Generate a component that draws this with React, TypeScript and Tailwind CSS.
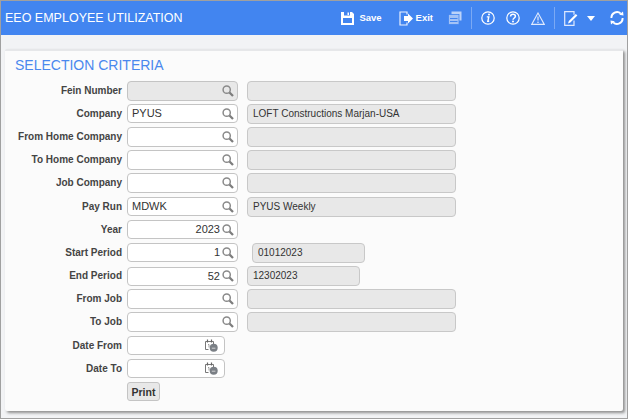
type Row = {
  label: string
  value?: string
  right?: boolean
  tall?: boolean
  disabled?: boolean
  date?: boolean
  desc?: string
  descClass?: string
}

const ROWS: Row[] = [
  { label: 'Fein Number', disabled: true, desc: '', tall: true },
  { label: 'Company', value: 'PYUS', desc: 'LOFT Constructions Marjan-USA' },
  { label: 'From Home Company', desc: '', tall: true },
  { label: 'To Home Company', desc: '', tall: true },
  { label: 'Job Company', desc: '', tall: true },
  { label: 'Pay Run', value: 'MDWK', desc: 'PYUS Weekly' },
  { label: 'Year', value: '2023', right: true },
  { label: 'Start Period', value: '1', right: true, desc: '01012023', descClass: 'ml-[14px] w-[113px]' },
  { label: 'End Period', value: '52', right: true, desc: '12302023', descClass: 'ml-[9px] w-[113px]' },
  { label: 'From Job', desc: '', tall: true },
  { label: 'To Job', desc: '', tall: true },
  { label: 'Date From', date: true },
  { label: 'Date To', date: true },
]

function SaveIcon() {
  return (
    <svg width="13" height="14" viewBox="0 0 13 14" fill="none">
      <path d="M0 1h11l2 2v11H0z" fill="#fff" />
      <rect x="3" y="1" width="6" height="3.5" fill="#4285f0" />
      <rect x="6.5" y="1.5" width="1.5" height="2.5" fill="#fff" />
      <rect x="2" y="7" width="9" height="5" fill="#4285f0" />
    </svg>
  )
}

function ExitIcon() {
  return (
    <svg width="15" height="15" viewBox="0 0 15 15" fill="none">
      <path d="M8 3.5V1H1v13h7v-2.5" stroke="#eaf1fe" strokeWidth="1.2" />
      <path d="M5 5h4V2.5L14 7.5l-5 5V10H5z" fill="#fff" />
    </svg>
  )
}

function PrintIcon() {
  return (
    <svg width="14" height="14" viewBox="0 0 14 14" fill="none">
      <rect x="3.5" y="0.5" width="10" height="9" fill="#bcd3f9" />
      <rect x="0.5" y="3.5" width="10.5" height="10" fill="#a3c2f6" stroke="#4285f0" strokeWidth="0.8" />
      <path d="M2 7.5h7.5M2 10.5h7.5" stroke="#4285f0" strokeWidth="1" />
    </svg>
  )
}

function InfoIcon() {
  return (
    <svg width="14" height="14" viewBox="0 0 14 14" fill="none">
      <circle cx="7" cy="7" r="6.2" stroke="#fff" strokeWidth="1.2" />
      <path d="M5.8 5.9h2l-1 4.4h1.4" stroke="#fff" strokeWidth="1.4" />
      <circle cx="8" cy="3.6" r="1" fill="#fff" />
    </svg>
  )
}

function HelpIcon() {
  return (
    <svg width="14" height="14" viewBox="0 0 14 14" fill="none">
      <circle cx="7" cy="7" r="6.2" stroke="#fff" strokeWidth="1.2" />
      <path d="M4.6 5.4C4.6 4 5.7 3.2 7 3.2s2.4.8 2.4 2.1C9.4 7 7 7 7 8.8" stroke="#fff" strokeWidth="1.5" />
      <circle cx="7" cy="10.6" r="1" fill="#fff" />
    </svg>
  )
}

function WarnIcon() {
  return (
    <svg width="14" height="13" viewBox="0 0 14 13" fill="none">
      <path d="M7 1 13.3 12.4H.7z" stroke="#dfe9fd" strokeWidth="1.1" />
      <path d="M7 4.5v4" stroke="#dfe9fd" strokeWidth="1.2" />
      <circle cx="7" cy="10.2" r="0.8" fill="#dfe9fd" />
    </svg>
  )
}

function NoteIcon() {
  return (
    <svg width="14" height="15" viewBox="0 0 14 15" fill="none">
      <path d="M10 9.5v4.8H.7V.7H10v3" stroke="#dfe9fd" strokeWidth="1.2" />
      <path d="M4 12.5 4.8 10l7-7 1.6 1.6-7 7z" fill="#fff" />
    </svg>
  )
}

function RefreshIcon() {
  return (
    <svg width="14" height="14" viewBox="0 0 14 14" fill="none">
      <path d="M10.8 2.6A5.6 5.6 0 0 0 1.4 7" stroke="#fff" strokeWidth="1.9" />
      <path d="M3.2 11.4A5.6 5.6 0 0 0 12.6 7" stroke="#fff" strokeWidth="1.9" />
      <path d="M9.2 3.8 13.5 4.5 13 0.5zM4.8 10.2.5 9.5 1 13.5z" fill="#fff" />
    </svg>
  )
}

function SearchIcon() {
  return (
    <svg width="12" height="12" viewBox="0 0 12 12" fill="none">
      <circle cx="4.7" cy="4.7" r="3.6" stroke="#8a8a8a" strokeWidth="1.5" />
      <path d="M7.5 7.5 11 11" stroke="#7d7d7d" strokeWidth="2.3" />
    </svg>
  )
}

function CalendarIcon() {
  return (
    <svg width="13" height="13" viewBox="0 0 13 13" fill="none">
      <path d="M3.5 10.5H.5v-8h8v2.5" stroke="#777" strokeWidth="1" />
      <path d="M2.5 0.5v3M6.5 0.5v3" stroke="#666" strokeWidth="1.2" />
      <path d="M3 5.5h1v3" stroke="#888" strokeWidth="0.8" />
      <circle cx="8.7" cy="8.7" r="4" fill="#7a7f85" />
      <path d="M6.8 9.2h3.6" stroke="#e6e6e6" strokeWidth="0.8" />
    </svg>
  )
}

function Field({ row }: { row: Row }) {
  const height = row.tall ? 'h-[20px]' : 'h-[19px]'
  const width = row.date ? 'w-[98px]' : 'w-[111px]'
  const bg = row.disabled ? 'bg-[#e8e8e8]' : 'bg-white'
  return (
    <div className={`flex items-center rounded-[4px] border border-[#c4c4c4] pl-[4px] pr-[3px] ${height} ${width} ${bg}`}>
      <span className={`flex-1 text-[11px] leading-none text-[#333] ${row.right ? 'text-right' : ''}`}>{row.value}</span>
      {row.date ? (
        <span className="mr-[3px] flex"><CalendarIcon /></span>
      ) : (
        <span className="ml-[2px] flex"><SearchIcon /></span>
      )}
    </div>
  )
}

export default function App() {
  return (
    <div className="flex h-[419px] w-[628px] flex-col overflow-hidden border-b border-l border-r border-t border-[#a0a0a0] bg-[#f2f3f5] font-['Liberation_Sans',sans-serif]">
      <header className="flex h-[34px] shrink-0 items-center bg-[#4285f0] pl-[4px] text-white">
        <h1 className="text-[12.5px] leading-none">EEO EMPLOYEE UTILIZATION</h1>
        <div className="ml-auto flex h-full items-center pr-[3px]">
          <SaveIcon />
          <span className="ml-[5px] text-[9.5px] font-bold">Save</span>
          <span className="ml-[17px] flex"><ExitIcon /></span>
          <span className="ml-[2px] text-[9.5px] font-bold">Exit</span>
          <span className="ml-[15px] flex"><PrintIcon /></span>
          <span className="mx-[9px] h-[22px] w-px bg-[#7ba9f4]" />
          <InfoIcon />
          <span className="ml-[11px] flex"><HelpIcon /></span>
          <span className="ml-[11px] flex"><WarnIcon /></span>
          <span className="mx-[9px] h-[22px] w-px bg-[#7ba9f4]" />
          <NoteIcon />
          <span className="ml-[9px] h-0 w-0 border-x-[4px] border-t-[5px] border-x-transparent border-t-white" />
          <span className="ml-[15px] flex"><RefreshIcon /></span>
        </div>
      </header>
      <div className="min-h-0 flex-1 pb-[5px] pl-[4px] pr-[4px] pt-[14px]">
        <section className="h-[362px] rounded-[2px] border-t-2 border-[#e6e7e9] bg-[#fbfbfb] pl-[9px] pt-[6px] shadow-[2px_2px_3px_#8f8f8f]">
          <h2 className="pl-[1px] text-[14px] leading-[16px] text-[#4a88ee]">SELECTION CRITERIA</h2>
          <div className="mt-[6px] flex flex-col">
            {ROWS.map((row) => (
              <div key={row.label} className="flex h-[23.2px] items-center">
                <label className="w-[108px] shrink-0 text-right text-[10px] font-bold leading-none text-[#444]">
                  {row.label}
                </label>
                <div className="ml-[5px]">
                  <Field row={row} />
                </div>
                {row.desc !== undefined && (
                  <div
                    className={`flex h-[20px] items-center rounded-[4px] border border-[#c8c8c8] bg-[#e8e8e8] pl-[5px] text-[10px] leading-none text-[#333] ${row.descClass ?? 'ml-[9px] w-[209px]'}`}
                  >
                    {row.desc}
                  </div>
                )}
              </div>
            ))}
            <div className="flex h-[23px] items-center pl-[113px]">
              <button
                type="button"
                className="h-[19px] w-[33px] rounded-[3px] border border-[#c4c4c4] bg-[#e8e8e8] text-[10.5px] font-bold leading-none text-[#333]"
              >
                Print
              </button>
            </div>
          </div>
        </section>
      </div>
    </div>
  )
}
